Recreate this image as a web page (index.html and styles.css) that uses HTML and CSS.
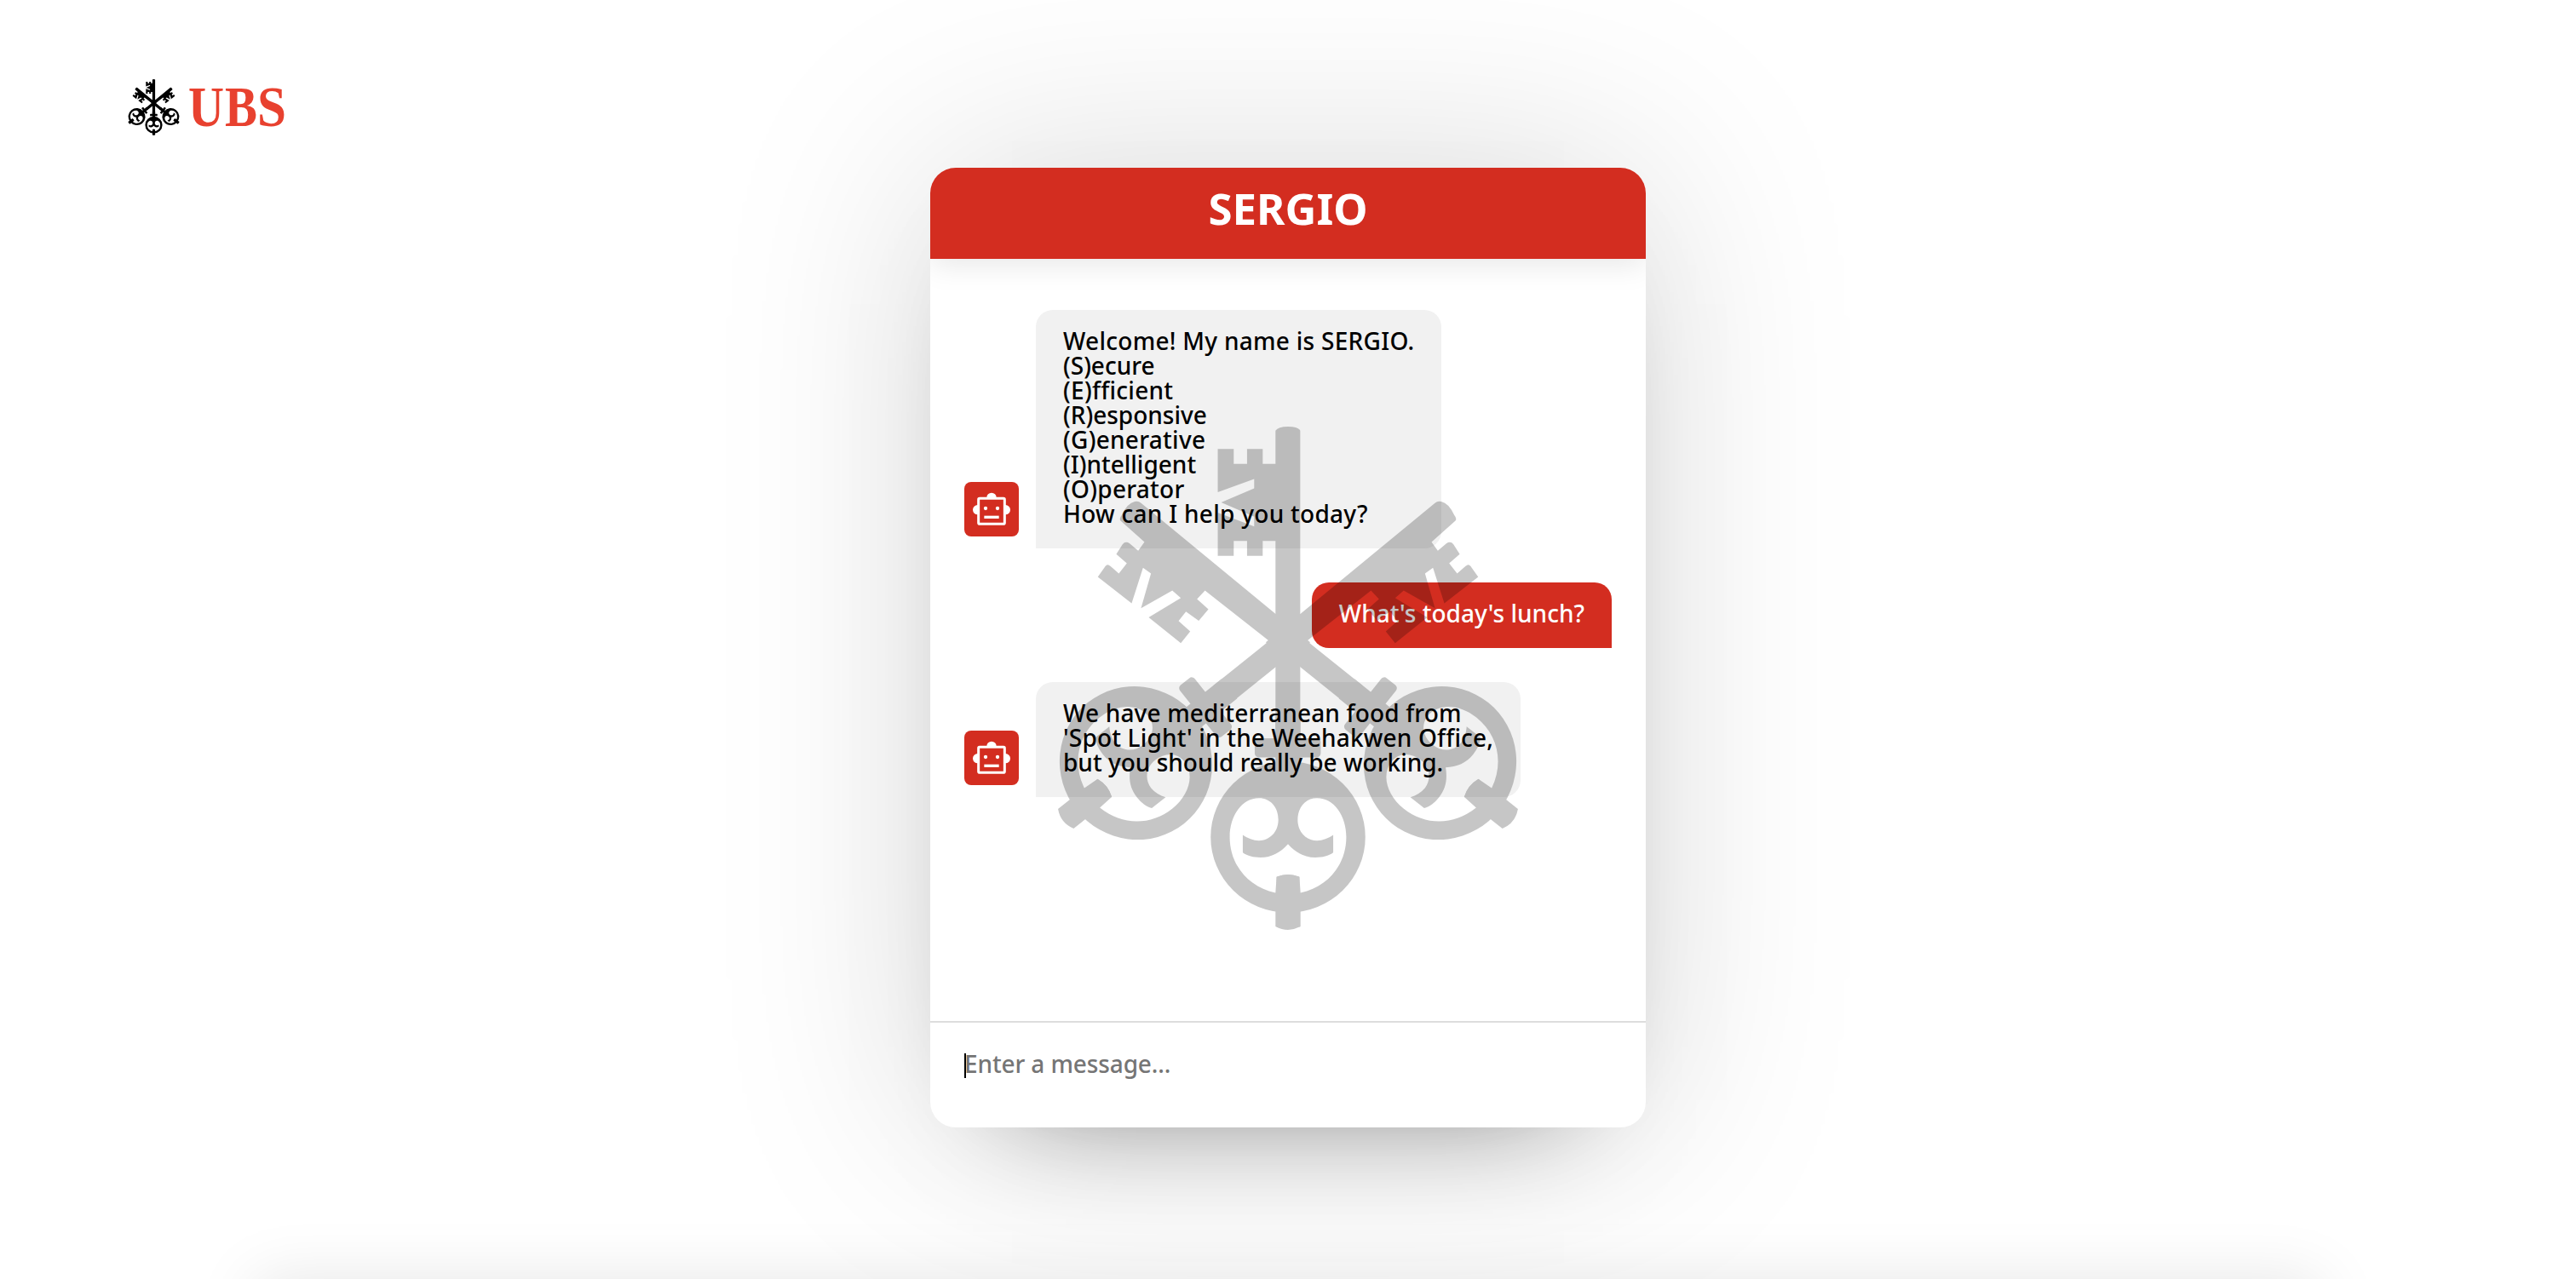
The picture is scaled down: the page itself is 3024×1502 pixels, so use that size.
FILE: index.html
```html
<!DOCTYPE html>
<html lang="en">
<head>
<meta charset="utf-8">
<title>SERGIO</title>
<link rel="stylesheet" href="styles.css">
</head>
<body>
<svg class="defs" aria-hidden="true">
  <defs>
    <g id="key-base">
      <rect x="-117" y="-347" width="232" height="67" rx="14"/>
      <rect x="-44" y="-420" width="88" height="200"/>
      <path fill-rule="evenodd" d="M-272,0 A272,266 0 1 1 272,0 A272,266 0 1 1 -272,0Z M-205,0 C-205,-75 -162,-137 -102,-137 C-62,-137 -34,-105 -34,-60 C-34,-15 -67,13 -102,13 C-122,13 -142,5 -159,-7 L-159,55 C-142,67 -122,72 -97,72 C-57,72 -27,55 0,25 C27,55 57,72 97,72 C122,72 142,67 159,55 L159,-7 C142,5 122,13 102,13 C67,13 34,-15 34,-60 C34,-105 62,-137 102,-137 C162,-137 205,-75 205,0 C205,95 143,175 44,197 L40,140 Q0,125 -40,140 L-44,197 C-143,175 -205,95 -205,0Z"/>
      <path d="M-40,141 Q0,124 40,141 V196 L44,200 V315 Q0,339 -44,315 V200 L-40,196Z"/>
    </g>
    <g id="side-key">
      <path d="M258,362 Q252,355 262,343 Q282,300 308,295 Q320,291 330,300 L925,790 L860,855 L778,783 L555,608 L527,638 L567,674 L533,714 L488,682 L462,715 L503,752 L470,793 L357,702 L470,634 L440,608 L330,670 L365,548 L337,528 L297,653 L178,560 L205,522 Q212,512 222,522 L252,548 L280,512 L243,480 L265,445 Q275,433 290,442 L320,468 L342,437Z"/>
      <path d="M803,690 L893,787 L804,877 L640,1009 L585,942 L781,785 L700,700Z"/>
      <use href="#key-base" transform="translate(312 1215) rotate(51.5)"/>
    </g>
    <symbol id="keys" viewBox="38 31 1618 1774">
      <path d="M803,45 Q812,31 847,31 Q882,31 890,45 V1150 H803 V433 H758 V486 H703 V433 H656 V486 H600 V334 L728,382 V348 L612,298 L728,248 V215 L600,262 V110 H656 V162 H703 V110 H758 V162 H803Z"/>
      <use href="#side-key"/>
      <use href="#side-key" transform="translate(1694 0) scale(-1 1)"/>
      <use href="#key-base" transform="translate(847 1475)"/>
    </symbol>
    <symbol id="robot" viewBox="0 0 192 192">
      <circle cx="47" cy="98" r="17" fill="#fff"/>
      <circle cx="145" cy="98" r="17" fill="#fff"/>
      <circle cx="96" cy="55" r="17" fill="#fff"/>
      <rect x="50" y="58" width="92" height="90" rx="4" fill="#d32d20" stroke="#fff" stroke-width="9"/>
      <circle cx="75" cy="93" r="6.5" fill="#fff"/>
      <circle cx="117" cy="93" r="6.5" fill="#fff"/>
      <rect x="70" y="119" width="52" height="10" fill="#fff"/>
    </symbol>
  </defs>
</svg>
<div class="page">
  <a class="brand" aria-label="UBS">
    <svg class="brand-keys" aria-hidden="true"><use href="#keys"/></svg>
    <svg class="brand-name" viewBox="0 0 114 66">
      <text x="-1" y="54.5" textLength="42" lengthAdjust="spacingAndGlyphs">U</text>
      <text x="42" y="54.5" textLength="38" lengthAdjust="spacingAndGlyphs">B</text>
      <text x="80" y="54.5" textLength="34" lengthAdjust="spacingAndGlyphs">S</text>
    </svg>
  </a>
  <main class="chat">
    <header class="chat-header"><h1>SERGIO</h1></header>
    <section class="messages">
      <div class="row">
        <svg class="avatar"><use href="#robot"/></svg>
        <div class="bubble bot">Welcome! My name is SERGIO.<br><span class="tight">(S)ecure</span><br>(E)fficient<br><span class="tight">(R)esponsive</span><br>(G)enerative<br><span class="tight">(I)ntelligent</span><br>(O)perator<br>How can I help you today?</div>
      </div>
      <div class="row user-row">
        <div class="bubble user"><span class="tight">What's today's lunch?</span></div>
      </div>
      <div class="row">
        <svg class="avatar"><use href="#robot"/></svg>
        <div class="bubble bot"><span class="snug">We have mediterranean food from<br>'Spot Light' in the Weehakwen Office,</span><br><span class="tight">but you should really be working.</span></div>
      </div>
      <svg class="watermark" aria-hidden="true"><use href="#keys"/></svg>
    </section>
    <form class="composer">
      <span class="caret"></span>
      <input class="field" type="text" placeholder="Enter a message...">
    </form>
  </main>
  <footer class="page-end"></footer>
</div>
</body>
</html>
```
FILE: styles.css
```css
* { box-sizing: border-box; }

body {
  margin: 0;
  background: #fff;
  font-family: "Noto Sans", "Open Sans", sans-serif;
  font-weight: 500;
  font-size: 28px;
  line-height: 29px;
  letter-spacing: 0.28px;
  color: #000;
}

.defs { position: absolute; width: 0; height: 0; }

.page {
  position: relative;
  display: grid;
  grid-template-columns: 1fr 840px 1fr;
  align-items: start;
  height: 1502px;
  overflow: hidden;
}

.brand {
  display: flex;
  gap: 11px;
  margin: 93px 0 0 150px;
}
.brand-keys { width: 61px; height: 66px; }
.brand-name {
  width: 114px;
  height: 66px;
  overflow: visible;
  fill: #e8412f;
  font: 700 67px "Liberation Serif", serif;
  letter-spacing: 0;
}

.chat {
  display: flex;
  flex-direction: column;
  height: 1127px;
  margin-top: 196.5px;
  border-radius: 30px;
  overflow: hidden;
  background: #fff;
  box-shadow: 0 0 256px rgba(0, 0, 0, 0.15), 0 64px 128px -96px rgba(0, 0, 0, 0.5);
}

.chat-header {
  flex: none;
  height: 107px;
  padding-top: 8px;
  background: #d32d20;
  box-shadow: 0 6px 36px rgba(0, 0, 0, 0.1);
  text-align: center;
}
.chat-header h1 {
  margin: 0;
  font-size: 51px;
  font-weight: 700;
  line-height: 78px;
  letter-spacing: 0;
  color: #fff;
}

.messages {
  position: relative;
  flex: 1;
  display: flex;
  flex-direction: column;
  gap: 40px;
  padding: 60px 40px 0;
}

.row { display: flex; align-items: flex-end; }
.user-row { justify-content: flex-end; }

.avatar {
  flex: none;
  width: 64px;
  height: 64px;
  margin: 0 20px 14px 0;
  border-radius: 8px;
  background: #d32d20;
}

.bubble {
  padding: 22px 32px 26px;
  white-space: nowrap;
}
.bot {
  border-radius: 20px 20px 20px 0;
  background: #f1f1f1;
}
.user {
  border-radius: 20px 20px 0 20px;
  background: #d32d20;
  color: #fff;
}
.tight { letter-spacing: 0; }
.snug { letter-spacing: 0.17px; }

.watermark {
  position: absolute;
  top: 197px;
  left: 149.5px;
  width: 540px;
  height: 592px;
  opacity: 0.22;
}

.composer {
  position: relative;
  flex: none;
  display: flex;
  height: 124.5px;
  padding: 28px 40px 0;
  border-top: 2px solid #ddd;
}
.field {
  flex: 1;
  height: 40px;
  padding: 0;
  border: 0;
  outline: 0;
  background: none;
  font: inherit;
  letter-spacing: -0.12px;
}
.field::placeholder { color: #757575; opacity: 1; }
.caret {
  position: absolute;
  top: 36px;
  left: 40px;
  width: 2px;
  height: 29px;
  background: #000;
}

.page-end {
  position: absolute;
  top: 1502px;
  left: 300px;
  right: 300px;
  height: 400px;
  box-shadow: 0 0 70px rgba(0, 0, 0, 0.1);
}
```
